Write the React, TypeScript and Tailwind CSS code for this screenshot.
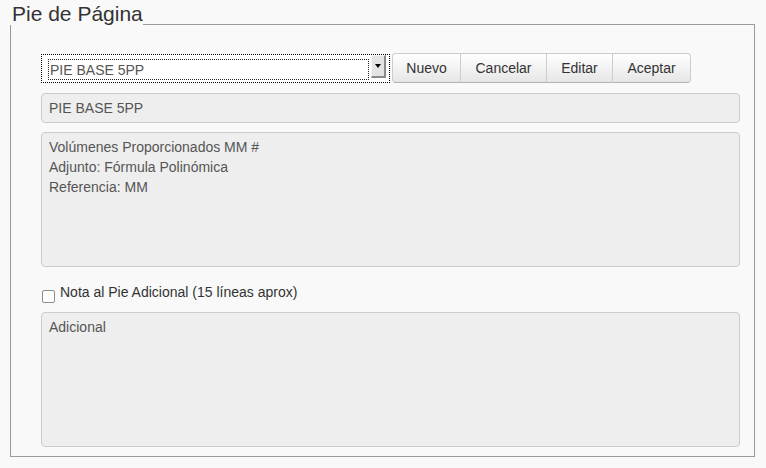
import React from "react";

const font = "font-['Liberation_Sans','Arial',sans-serif]";

function Btn({ label, w, first, last }: { label: string; w: string; first?: boolean; last?: boolean }) {
  return (
    <div
      className={`${w} h-[30px] flex items-center justify-center text-[14px] leading-[20px] text-[#333] bg-gradient-to-b from-[#ffffff] to-[#e6e6e6] border-t border-b border-l border-[#cccccc] border-b-[#b3b3b3] ${
        first ? "rounded-l-[4px]" : ""
      } ${last ? "rounded-r-[4px] border-r" : ""}`}
    >
      {label}
    </div>
  );
}

export default function App() {
  return (
    <div className={`w-[766px] h-[468px] bg-[#f9f9f9] ${font} overflow-hidden`}>
      <div className="ml-[10px] w-[745px]">
        {/* legend row */}
        <div className="flex h-[25px]">
          <span className="pl-[2px] pt-[3px] text-[21px] leading-[22px] text-[#333]">Pie de Página</span>
          <div className="flex-1 border-b border-[#9a9a9a]" />
        </div>
        {/* fieldset body */}
        <div className="h-[432px] border-l border-r border-b border-[#9a9a9a] pl-[30px] pr-[14px] pt-[28px] flex flex-col">
          {/* select + buttons */}
          <div className="flex items-start h-[30px]">
            <div className="mt-[1px] w-[349px] h-[29px] bg-white border border-dotted border-black flex items-start">
              <div className="ml-[6px] mt-[4px] w-[321px] h-[21px] border border-dotted border-[#222] flex items-center">
                <span className="pl-[1px] text-[14px] leading-[20px] text-[#555]">PIE BASE 5PP</span>
              </div>
              <div className="ml-[2px] mt-0 w-[15px] h-[23px] bg-[#e4e4e4] border-t border-l border-t-[#f4f4f4] border-l-[#f4f4f4] border-r-2 border-b-2 border-r-[#8a8a8a] border-b-[#8a8a8a] flex items-center justify-center">
                <div className="w-0 h-0 border-l-[3px] border-r-[3px] border-t-[4px] border-l-transparent border-r-transparent border-t-black" />
              </div>
            </div>
            <div className="ml-[2px] flex">
              <Btn label="Nuevo" w="w-[68px]" first />
              <Btn label="Cancelar" w="w-[86px]" />
              <Btn label="Editar" w="w-[66px]" />
              <Btn label="Aceptar" w="w-[79px]" last />
            </div>
          </div>
          {/* text input */}
          <div className="mt-[10px] h-[30px] bg-[#eeeeee] border border-[#cccccc] rounded-[4px] px-[7px] py-[4px] text-[14px] leading-[20px] text-[#555]">
            PIE BASE 5PP
          </div>
          {/* textarea 1 */}
          <div className="mt-[9px] h-[135px] bg-[#eeeeee] border border-[#cccccc] rounded-[4px] px-[7px] py-[4px] text-[14px] leading-[20px] text-[#555]">
            <div>Volúmenes Proporcionados MM #</div>
            <div>Adjunto: Fórmula Polinómica</div>
            <div>Referencia: MM</div>
          </div>
          {/* checkbox row */}
          <div className="mt-[15px] h-[20px] flex items-start">
            <div className="ml-[1px] mt-[8px] w-[13px] h-[13px] bg-white border border-[#8f8f8f] rounded-[2px]" />
            <span className="ml-[5px] text-[14px] leading-[20px] text-[#333]">Nota al Pie Adicional (15 líneas aprox)</span>
          </div>
          {/* textarea 2 */}
          <div className="mt-[10px] h-[135px] bg-[#eeeeee] border border-[#cccccc] rounded-[4px] px-[7px] py-[4px] text-[14px] leading-[20px] text-[#555]">
            Adicional
          </div>
        </div>
      </div>
    </div>
  );
}
